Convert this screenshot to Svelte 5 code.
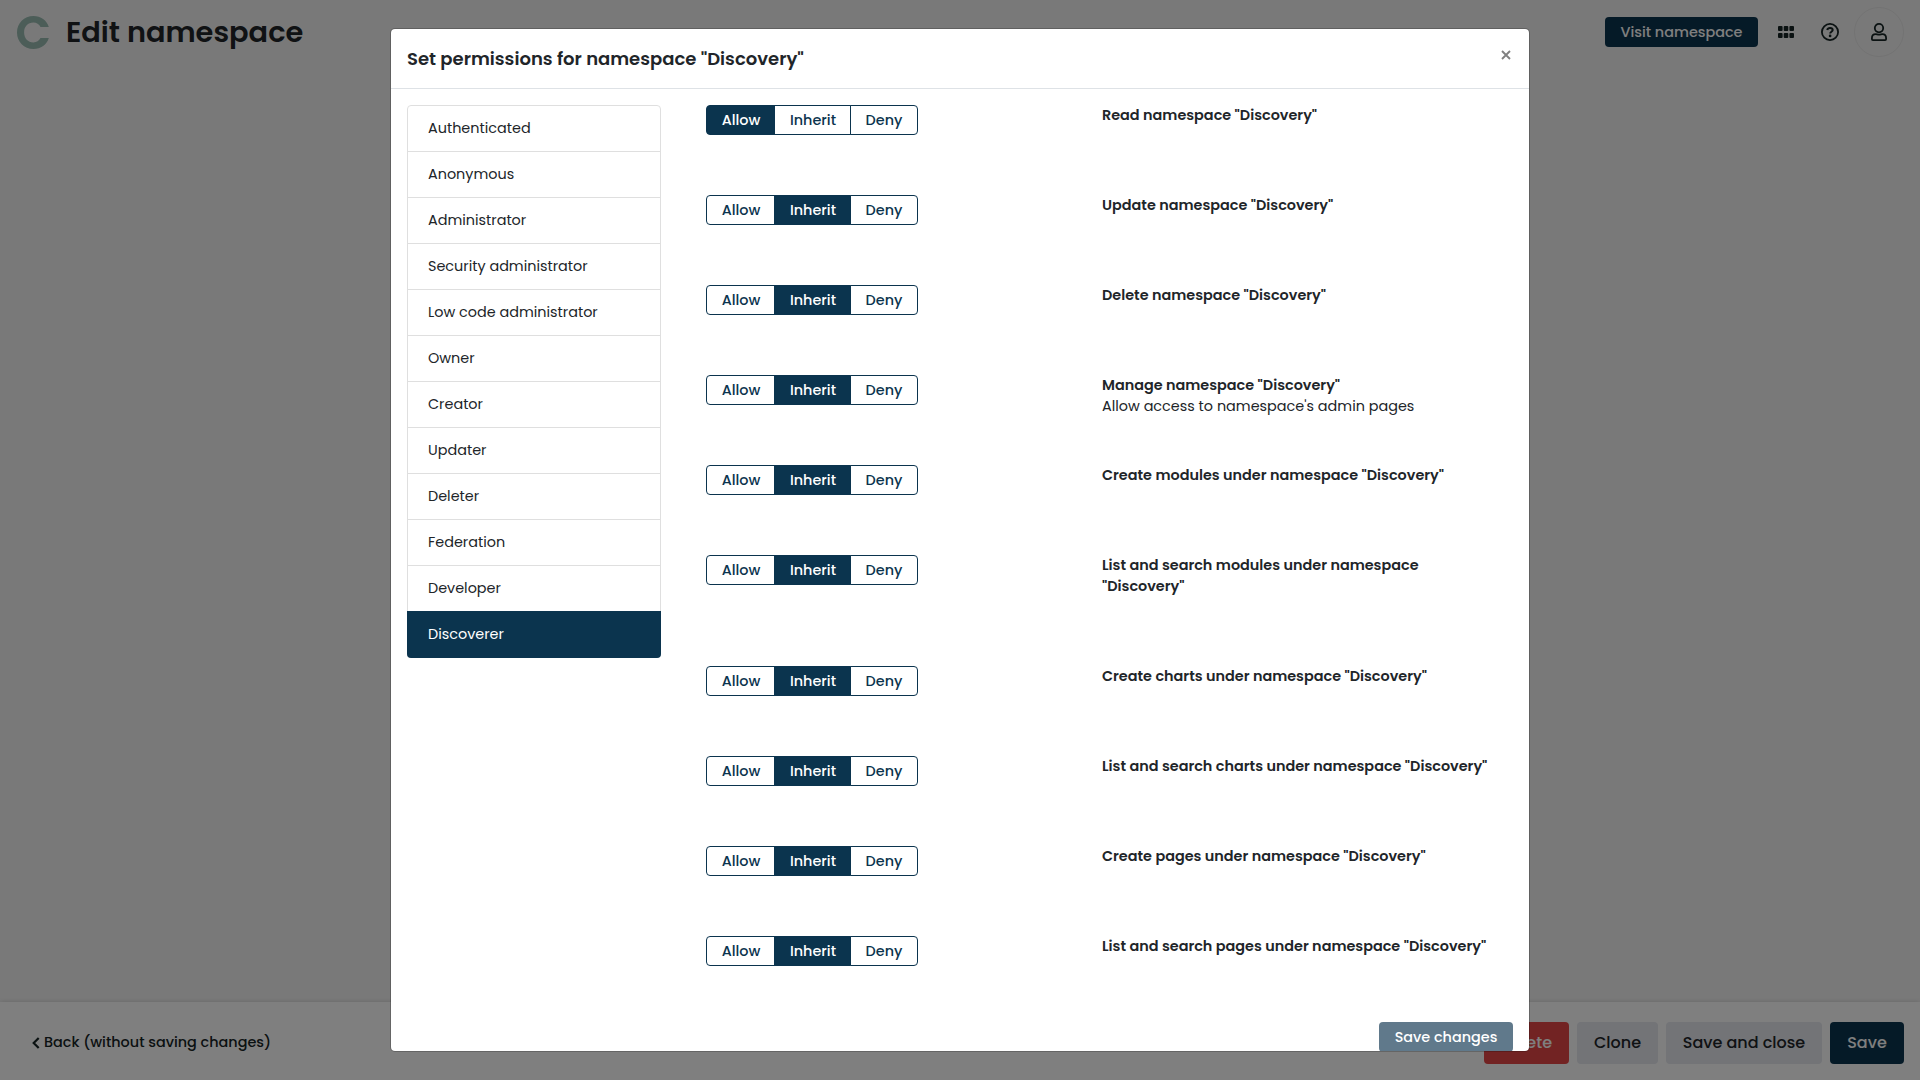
<script>
  const roles = [
    'Authenticated', 'Anonymous', 'Administrator', 'Security administrator',
    'Low code administrator', 'Owner', 'Creator', 'Updater', 'Deleter',
    'Federation', 'Developer', 'Discoverer'
  ];
  const options = ['Allow', 'Inherit', 'Deny'];
  let activeRole = $state('Discoverer');
  let rules = $state([
    { lines: ['Read namespace "Discovery"'], note: '', value: 'Allow' },
    { lines: ['Update namespace "Discovery"'], note: '', value: 'Inherit' },
    { lines: ['Delete namespace "Discovery"'], note: '', value: 'Inherit' },
    { lines: ['Manage namespace "Discovery"'], note: "Allow access to namespace's admin pages", value: 'Inherit' },
    { lines: ['Create modules under namespace "Discovery"'], note: '', value: 'Inherit' },
    { lines: ['List and search modules under namespace', '"Discovery"'], note: '', value: 'Inherit' },
    { lines: ['Create charts under namespace "Discovery"'], note: '', value: 'Inherit' },
    { lines: ['List and search charts under namespace "Discovery"'], note: '', value: 'Inherit' },
    { lines: ['Create pages under namespace "Discovery"'], note: '', value: 'Inherit' },
    { lines: ['List and search pages under namespace "Discovery"'], note: '', value: 'Inherit' }
  ]);
</script>

<div class="page">
  <header class="topbar">
    <svg class="logo" width="32" height="33" viewBox="0 0 32 33">
      <path d="M31.800 11C29.800 4.300 23.800 0 16.500 0 7 0 0 7.100 0 16.500S7 33 16.500 33c7.300 0 13.300-4.300 15.300-11h-8.300c-1.400 2.800-3.900 4.400-7.100 4.400-5.500 0-9.300-4-9.300-9.900s3.800-9.900 9.300-9.900c3.200 0 5.700 1.600 7.100 4.400z" fill="#98bab0" />
    </svg>
    <h1>Edit namespace</h1>
    <div class="tools">
      <button class="visit">Visit namespace</button>
      <svg class="grid" width="16" height="12" viewBox="0 0 16 12" fill="#162425">
        <rect width="4.600" height="5" rx="1" /><rect x="5.700" width="4.600" height="5" rx="1" /><rect x="11.400" width="4.600" height="5" rx="1" />
        <rect y="7" width="4.600" height="5" rx="1" /><rect x="5.700" y="7" width="4.600" height="5" rx="1" /><rect x="11.400" y="7" width="4.600" height="5" rx="1" />
      </svg>
      <svg class="help" width="18" height="18" viewBox="0 0 18 18" fill="none" stroke="#162425">
        <circle cx="9" cy="9" r="8.1" stroke-width="1.8" />
        <path d="M6.200 7.1C6.600 5.600 7.600 5 9 5c1.600 0 2.700.8 2.700 2.100 0 1.600-2.500 1.700-2.500 3.300" stroke-width="2" />
        <circle cx="9.1" cy="12.900" r="1.350" fill="#162425" stroke="none" />
      </svg>
      <span class="avatar">
        <svg width="16" height="18" viewBox="0 0 16 18" fill="none" stroke="#162425" stroke-width="1.8">
          <circle cx="8" cy="5.1" r="4.2" />
          <path d="M.9 15.2c0-2.6 1.5-4 3.8-4 1.2 0 1.7.5 3.3.5s2.100-.5 3.300-.5c2.300 0 3.800 1.400 3.800 4v.9c0 .6-.4 1-1 1H1.900c-.6 0-1-.4-1-1z" />
        </svg>
      </span>
    </div>
  </header>

  <footer class="toolbar">
    <a class="back" href="#back">
      <svg width="8" height="12" viewBox="0 0 8 12"><path d="M6.700 1L1.700 6l5 5" fill="none" stroke="#162425" stroke-width="2.200" /></svg>
      <span>Back (without saving changes)</span>
    </a>
    <div class="actions">
      <button class="btn delete">Delete</button>
      <button class="btn clone">Clone</button>
      <button class="btn close-save">Save and close</button>
      <button class="btn save">Save</button>
    </div>
  </footer>
</div>

<div class="backdrop">
  <div class="modal" role="dialog" aria-modal="true">
    <header class="modal-head">
      <h2>Set permissions for namespace "Discovery"</h2>
      <button class="dismiss" aria-label="Close">
        <svg width="10" height="10" viewBox="0 0 10 10"><path d="M1 1l8 8M9 1L1 9" stroke="#808080" stroke-width="1.900" /></svg>
      </button>
    </header>
    <div class="modal-body">
      <div class="roles">
        {#each roles as role}
          <button class="role" class:active={role === activeRole} onclick={() => (activeRole = role)}>{role}</button>
        {/each}
      </div>
      <div class="rules">
        {#each rules as rule}
          <div class="rule">
            <div class="group">
              {#each options as option}
                <button class={['opt', option.toLowerCase(), rule.value === option && 'on']} onclick={() => (rule.value = option)}>{option}</button>
              {/each}
            </div>
            <div class="info">
              {#each rule.lines as line}<strong>{line}</strong>{/each}
              <p>{rule.note}</p>
            </div>
          </div>
        {/each}
      </div>
    </div>
    <div class="modal-foot"><button class="submit">Save changes</button></div>
  </div>
</div>

<style>
  :global(body) { margin: 0; overflow: hidden; }
  .page, .backdrop { font-family: Poppins, Inter, sans-serif; font-size: 14.4px; color: #212529; }
  .page *, .backdrop * { box-sizing: border-box; }
  button { font: inherit; border: 0; padding: 0; margin: 0; white-space: nowrap; }
  h1, h2, p { margin: 0; }
  .page { height: 1080px; background: #f3f3f3; display: flex; flex-direction: column; justify-content: space-between; }
  .topbar { height: 64px; display: flex; align-items: center; padding: 0 16px 0 17px; }
  .logo { flex: none; }
  h1 { margin-left: 17px; font-size: 28.8px; font-weight: 600; line-height: 1; white-space: nowrap; }
  .tools { margin-left: auto; display: flex; align-items: center; }
  .visit { width: 153px; height: 30px; border-radius: 4px; background: #0b344e; color: #fff; font-size: 14.4px; font-weight: 500; }
  .grid { margin-left: 20px; }
  .help { margin-left: 27px; }
  .avatar { width: 50px; height: 50px; margin-left: 15px; border: 1px solid #e6e6e6; border-radius: 50%; display: flex; align-items: center; justify-content: center; }
  .toolbar { height: 78px; background: #fff; box-shadow: 0 0 5px rgba(0, 0, 0, .15); display: flex; align-items: flex-start; justify-content: space-between; padding: 20px 16px 0 31.5px; }
  .back { height: 41px; display: flex; align-items: center; gap: 4.5px; color: #162425; font-weight: 500; text-decoration: none; white-space: nowrap; }
  .actions { display: flex; gap: 8px; }
  .btn { height: 42px; padding-bottom: 2px; border-radius: 4px; font-size: 16px; font-weight: 500; color: #212529; background: #e6e8ef; }
  .delete { width: 85px; background: #e54646; color: #fff; }
  .clone { width: 81px; }
  .close-save { width: 156px; }
  .save { width: 74px; background: #0b344e; color: #fff; }

  .backdrop { position: absolute; inset: 0; background: rgba(0, 0, 0, .5); padding: 28px 390px; box-sizing: border-box; }
  .modal { height: 1024px; background: #fff; background-clip: padding-box; border: 1px solid rgba(0, 0, 0, .2); border-radius: 5px; overflow: hidden; display: flex; flex-direction: column; }
  .modal-head { height: 60px; flex: none; border-bottom: 1px solid #dee2e6; display: flex; justify-content: space-between; padding: 0 18px 0 16px; }
  h2 { font-size: 18px; font-weight: 600; line-height: 59px; white-space: nowrap; }
  .dismiss { width: 10px; height: 10px; margin-top: 21px; background: none; display: flex; }
  .modal-body { height: 917px; flex: none; display: flex; padding: 16px; gap: 45px; }
  .roles { width: 254px; height: 553px; flex: none; border: 1px solid #dfdfdf; border-radius: 4px; display: flex; flex-direction: column; }
  .role { height: 46px; flex: none; padding: 0 20px; text-align: left; background: none; color: #212529; border-bottom: 1px solid #dfdfdf; }
  .role.active { height: 47px; margin: -1px -1px 0; padding: 0 21px; background: #0b344e; color: #fff; border: 0; border-radius: 0 0 4px 4px; }
  .rules { flex: 1; display: flex; flex-direction: column; }
  .rule { display: flex; align-items: flex-start; }
  .group { width: 396px; flex: none; display: flex; }
  .opt { height: 30px; padding-left: 1px; border: 1px solid #0b344e; background: #fff; color: #0b344e; font-weight: 500; }
  .opt.on { background: #0b344e; color: #fff; }
  .allow { width: 69px; border-radius: 4px 0 0 4px; }
  .inherit { width: 77px; margin-left: -1px; }
  .deny { width: 68px; margin-left: -1px; padding-left: 0; border-radius: 0 4px 4px 0; }
  .info { line-height: 21px; white-space: nowrap; padding-bottom: 33px; }
  .info strong { display: block; font-weight: 600; }
  .info p { height: 36px; }
  .modal-foot { display: flex; flex: none; justify-content: flex-end; padding: 16px 16px 0; }
  .submit { width: 134px; height: 30px; flex: none; border-radius: 4px; background: #60798b; color: #fff; font-weight: 500; }
</style>
